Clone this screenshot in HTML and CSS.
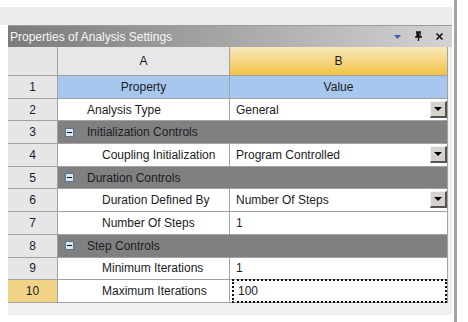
FILE: index.html
```html
<!DOCTYPE html>
<html lang="en">
<head>
    <meta charset="UTF-8">
    <title>Properties of Analysis Settings</title>
    <link rel="stylesheet" href="styles.css">
</head>
<body>
    <div class="frame">
        <div class="strip"></div>
        <div class="pane">
            <div class="titlebar">
                <span class="title">Properties of Analysis Settings</span>
                <span class="tools">
                    <svg class="tool" width="9" height="9" viewBox="0 0 9 9"><path d="M1 3 H8 L4.5 7 Z" fill="#3b5fae"/></svg>
                    <svg class="tool" width="9" height="11" viewBox="0 0 9 11"><path d="M2 1 H7 M3 1 V6 M6 1 V6 M1 6 H8 M4.5 6 V10" stroke="#111" stroke-width="1.4" fill="none"/><rect x="3" y="1" width="2" height="5" fill="#111"/></svg>
                    <svg class="tool" width="9" height="9" viewBox="0 0 9 9"><path d="M1.5 1.5 L7.5 7.5 M7.5 1.5 L1.5 7.5" stroke="#111" stroke-width="1.6"/></svg>
                </span>
            </div>
            <div class="grid">
                <div class="num head"></div>
                <div class="colhead col-a">A</div>
                <div class="colhead col-b">B</div>

                <div class="num">1</div>
                <div class="cell caption">Property</div>
                <div class="cell caption">Value</div>

                <div class="num">2</div>
                <div class="cell prop">Analysis Type</div>
                <div class="cell val">General<span class="drop"></span></div>

                <div class="num">3</div>
                <div class="group"><span class="toggle"></span>Initialization Controls</div>

                <div class="num">4</div>
                <div class="cell prop sub">Coupling Initialization</div>
                <div class="cell val">Program Controlled<span class="drop"></span></div>

                <div class="num">5</div>
                <div class="group"><span class="toggle"></span>Duration Controls</div>

                <div class="num">6</div>
                <div class="cell prop sub">Duration Defined By</div>
                <div class="cell val">Number Of Steps<span class="drop"></span></div>

                <div class="num">7</div>
                <div class="cell prop sub">Number Of Steps</div>
                <div class="cell val">1</div>

                <div class="num">8</div>
                <div class="group"><span class="toggle"></span>Step Controls</div>

                <div class="num">9</div>
                <div class="cell prop sub">Minimum Iterations</div>
                <div class="cell val">1</div>

                <div class="num selected">10</div>
                <div class="cell prop sub">Maximum Iterations</div>
                <div class="cell val"><span class="focus">100</span></div>
            </div>
        </div>
    </div>
</body>
</html>
```

FILE: styles.css
```css
body {
    margin: 0;
    background: #fff;
    font-family: "Liberation Sans", Arial, sans-serif;
    font-size: 12px;
    color: #1c1c24;
}
.frame {
    width: 457px;
    height: 322px;
    padding-top: 7px;
    box-sizing: border-box;
    border-right: 3px solid #a4a4a4;
}
.strip {
    width: 452px;
    height: 18px;
    background: #ececec;
}
.pane {
    margin-left: 8px;
    width: 444px;
    padding-bottom: 12px;
    background: #f0f0f0;
}
.titlebar {
    height: 22px;
    display: flex;
    align-items: center;
    justify-content: space-between;
    padding: 0 8px 0 2px;
    background: linear-gradient(to right, #7b7b7b, #d3d3d3);
    border-top: 1px solid #9c9c9c;
    box-sizing: border-box;
}
.title {
    color: #f6f6f6;
}
.tools {
    display: flex;
    align-items: center;
    gap: 12px;
}
.tool {
    display: block;
}
.grid {
    display: grid;
    width: 440px;
    grid-template-columns: 50px 172px 218px;
    grid-template-rows: 29px;
    grid-auto-rows: 22.7px;
}
.grid > div {
    box-sizing: border-box;
    border-right: 1px solid #a2a2a2;
    border-bottom: 1px solid #a2a2a2;
    display: flex;
    align-items: center;
    white-space: nowrap;
}
.num {
    justify-content: center;
    background: #e6e6e6;
    color: #1a1a30;
}
.num.selected {
    background: #f0d385;
}
.colhead {
    justify-content: center;
}
.col-a {
    background: #e7e7e7;
}
.col-b {
    background: linear-gradient(#f7e8bd, #f1c346);
}
.cell {
    background: #fff;
}
.caption {
    justify-content: center;
    background: #a8c7ee;
}
.prop {
    padding-left: 29px;
}
.prop.sub {
    padding-left: 44px;
}
.val {
    position: relative;
    padding-left: 6px;
}
.drop {
    position: absolute;
    right: 0;
    top: 2px;
    width: 17px;
    height: 17px;
    box-sizing: border-box;
    background: #d6d3cc;
    border-top: 1px solid #f4f4f4;
    border-left: 1px solid #f4f4f4;
    border-right: 2px solid #555;
    border-bottom: 2px solid #555;
}
.drop::after {
    content: "";
    position: absolute;
    left: 3px;
    top: 5px;
    border-left: 4px solid transparent;
    border-right: 4px solid transparent;
    border-top: 4px solid #000;
}
.focus {
    position: absolute;
    left: 2px;
    right: 0;
    top: -1px;
    bottom: -1px;
    padding-left: 4px;
    display: flex;
    align-items: center;
    border: 2px dotted #111;
}
.group {
    grid-column: span 2;
    background: #808080;
    padding-left: 7px;
}
.toggle {
    width: 9px;
    height: 9px;
    box-sizing: border-box;
    margin-right: 13px;
    border: 1px solid #57779a;
    background: #dde4ec;
    position: relative;
}
.toggle::after {
    content: "";
    position: absolute;
    left: 1px;
    top: 3px;
    width: 5px;
    height: 1px;
    background: #111;
}
```
